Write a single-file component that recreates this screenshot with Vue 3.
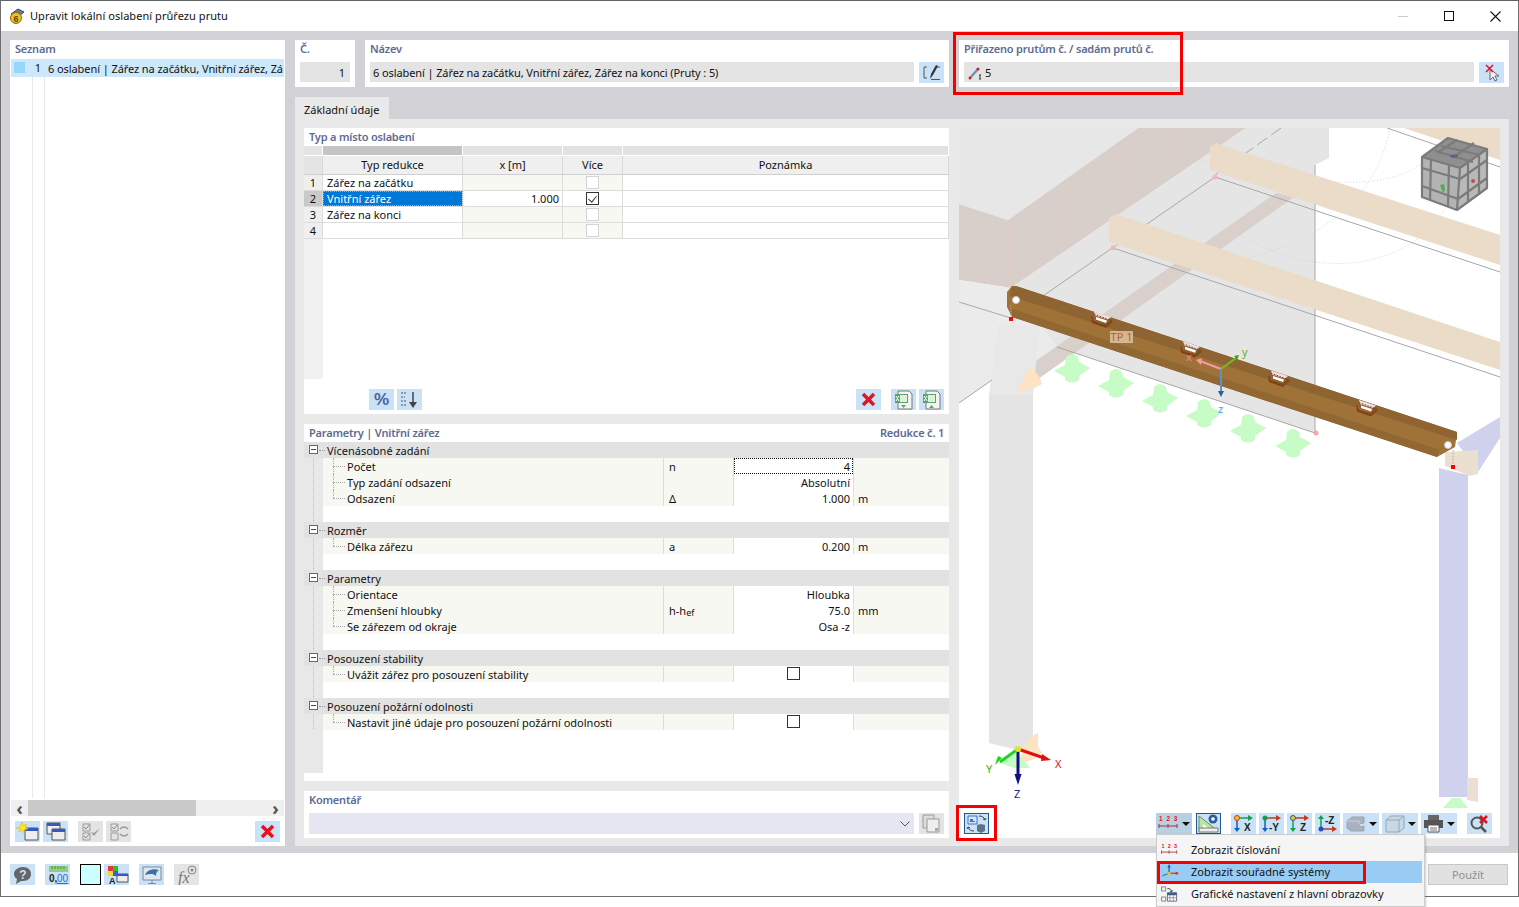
<script setup>
const icons = {
  pen: '<path d="M8 5H5v11h3" stroke="#555" fill="none"/><path d="M11 17l1-5 5-9 2 1-5 9z" fill="#333"/><path d="M18 5h3M12 17.500h9" stroke="#555"/>',
  pick: '<path d="M11 7l0 11 3-3 2 4 2-1-2-4 4 0z" fill="#eee" stroke="#667"/><path d="M7 3l7 7M14 3l-7 7" stroke="#e8101c" stroke-width="1.5"/>',
  del: '<path d="M7 5l11 11M18 5L7 16" stroke="#e8101c" stroke-width="3.4"/>',
  sort: '<path d="M4 4h5M4 8h4M4 12h5M4 16h6" stroke="#555" stroke-dasharray="2 1"/><path d="M16 3v12" stroke="#444" stroke-width="1.5"/><path d="M12 13h8l-4 6z" fill="#444"/>',
  xlsDown: '<path d="M7 2h11l3 3v15H7z" fill="#f4f4f4" stroke="#777"/><path d="M4 5h13v9H4z" fill="#5aa46a"/><path d="M9 6h7v7H9z" fill="#dff0df"/><path d="M5 7l3 5M8 7l-3 5" stroke="#fff"/><path d="M10 16h5l-2.5 3z" fill="#5aa46a"/>',
  xlsUp: '<path d="M7 2h11l3 3v15H7z" fill="#f4f4f4" stroke="#777"/><path d="M4 5h13v9H4z" fill="#5aa46a"/><path d="M9 6h7v7H9z" fill="#dff0df"/><path d="M5 7l3 5M8 7l-3 5" stroke="#fff"/><path d="M10 19h5l-2.5-3z" fill="#5aa46a"/>',
  newWin: '<path d="M10 7h13v12H10z" fill="#eee" stroke="#555"/><path d="M10 7h13v3H10z" fill="#3557c8"/><path d="M7 1l1.5 3.5L12 3l-2 3 3 2-3.5.5L9 12 7 9l-3 2 1-3.5L1 7l4-1z" fill="#ffe326" stroke="#d8b800" stroke-width=".5"/>',
  copyWin: '<path d="M4 2h13v11H4z" fill="#eee" stroke="#555"/><path d="M4 2h13v3H4z" fill="#3557c8"/><path d="M9 8h13v11H9z" fill="#eee" stroke="#555"/><path d="M9 8h13v3H9z" fill="#3557c8"/>',
  checks: '<path d="M5 3h7v7H5zM5 12h7v7H5z" fill="none" stroke="#999"/><path d="M6 6l2 2 3-4M6 15l2 2 3-4" stroke="#888" fill="none"/><path d="M13 11l3 4 6-8-6 5z" fill="#999"/>',
  swap: '<path d="M5 3h7v7H5zM5 12h7v7H5z" fill="none" stroke="#999"/><path d="M6 6l2 2 3-4" stroke="#888" fill="none"/><path d="M14 8c3-3 6-2 8 0M14 13c3 3 6 2 8 0" stroke="#999" stroke-width="1.5" fill="none"/>',
  help: '<path d="M13 3c5 0 8 3 8 7s-3 7-8 7h-2l-5 3 1-5c-2-1-3-3-3-5 0-4 4-7 9-7z" fill="#666"/><text x="13" y="14.5" font-size="12" font-weight="700" text-anchor="middle" fill="#c9e2f7" font-family="Liberation Sans">?</text>',
  decimals: '<path d="M4 2h19v6H4z" fill="#8fce7e"/><path d="M7 2v3M10 2v3M13 2v3M16 2v3M19 2v3" stroke="#4a8f3c"/><text x="4" y="18" font-size="10" font-weight="700" fill="#222" font-family="Liberation Sans">0,</text><text x="12" y="18" font-size="10" fill="#2d6fd0" text-decoration="underline" font-family="Liberation Sans">00</text>',
  colors: '<path d="M4 2h5v5H4z" fill="#e33"/><path d="M9 2h5v5H9z" fill="#3b3"/><path d="M4 7h5v5H4z" fill="#ed2"/><path d="M9 7h5v5H9z" fill="#36d"/><text x="5" y="20" font-size="9" font-weight="700" fill="#222" font-family="Liberation Sans">A</text><path d="M13 10h11v8H13z" fill="#eee" stroke="#555"/><path d="M13 10h11v2H13z" fill="#3557c8"/>',
  monitor: '<path d="M4 3h18v13H4z" fill="#dfe8f1" stroke="#7c8a99"/><path d="M6 11c2-5 8-7 14-5-2 1-3 3-3 6-3-3-7-2-11-1z" fill="#3d6fa8"/><path d="M13 16v3M9 19.5h8" stroke="#7c8a99"/>',
  formula: '<text x="4" y="19" font-size="16" font-style="italic" fill="#777" font-family="Liberation Serif">fx</text><circle cx="18" cy="6" r="4" fill="none" stroke="#888"/><circle cx="18" cy="6" r="1.5" fill="#888"/>',
  sync: '<path d="M4 3h9v8H4z" fill="#dbe7f6" stroke="#3b72c4"/><path d="M6 9V6h3v2h2v1z" fill="#3b72c4"/><path d="M13 12l4-1 4 1v6l-4 2-4-2z" fill="#5f7386"/><path d="M15 3c3 0 5 1 6 4M21 7l-2-1M21 7l1-2M10 18c-3 0-5-1-6-4M4 14l2 1M4 14l-1 2" stroke="#444" fill="none"/>',
  numbers: '<text x="3" y="8" font-size="6.5" font-weight="700" fill="#e8101c" font-family="Liberation Sans" letter-spacing="1">1 2 3</text><path d="M3 13h18" stroke="#a33"/><path d="M3 11v4M12 11v4M21 11v4" stroke="#a33"/>',
  ruler: '<path d="M3 3v15h19z" fill="#bde3a8" stroke="#6a8f5a"/><path d="M7 11v4h5z" fill="#fff"/><path d="M3 15h19v4H3z" fill="#eee" stroke="#777"/><circle cx="17" cy="6" r="4.5" fill="#2c5f9c"/><circle cx="17" cy="6" r="1.8" fill="#fff"/>',
  axisX: '<path d="M6 5v12" stroke="#1560b8" stroke-width="1.5"/><path d="M3 15h6l-3 4z" fill="#1560b8"/><path d="M6 5h13" stroke="#10a050" stroke-width="1.5"/><path d="M17 2l5 3-5 3z" fill="#10a050"/><circle cx="6" cy="5" r="2.5" fill="#f5c518" stroke="#c33"/><text x="13" y="18" font-size="10" font-weight="700" fill="#222" font-family="Liberation Sans">X</text>',
  axisY: '<path d="M6 5v12" stroke="#1560b8" stroke-width="1.5"/><path d="M3 15h6l-3 4z" fill="#1560b8"/><path d="M6 5h13" stroke="#c8381a" stroke-width="1.5"/><path d="M17 2l5 3-5 3z" fill="#c8381a"/><circle cx="6" cy="5" r="2.5" fill="#10a050"/><text x="10" y="18" font-size="10" font-weight="700" fill="#222" font-family="Liberation Sans">-Y</text>',
  axisZ: '<path d="M6 5v12" stroke="#10a050" stroke-width="1.5"/><path d="M3 15h6l-3 4z" fill="#10a050"/><path d="M6 5h13" stroke="#c8381a" stroke-width="1.5"/><path d="M17 2l5 3-5 3z" fill="#c8381a"/><circle cx="6" cy="5" r="2.5" fill="#f5c518" stroke="#1560b8"/><text x="13" y="18" font-size="10" font-weight="700" fill="#222" font-family="Liberation Sans">Z</text>',
  axisMZ: '<path d="M6 16V5" stroke="#10a050" stroke-width="1.5"/><path d="M3 6h6l-3-4z" fill="#10a050"/><path d="M6 16h13" stroke="#c8381a" stroke-width="1.5"/><path d="M17 13l5 3-5 3z" fill="#c8381a"/><circle cx="6" cy="16" r="2.5" fill="#1f4fd0"/><text x="10" y="11" font-size="10" font-weight="700" fill="#222" font-family="Liberation Sans">-Z</text>',
  solid: '<path d="M4 8l5-4h12v6l-5 1v3l5-1v5H8l-4-3z" fill="#a9b3bf" stroke="#9aa5b1"/><path d="M4 8h12v3" fill="none" stroke="#c9d0d8"/>',
  wire: '<path d="M4 7l5-4h13v12l-5 4H4zM4 7h13v12M17 7l5-4" fill="#c5ced8" fill-opacity=".5" stroke="#9aa5b1"/>',
  printer: '<path d="M7 2h11v5H7z" fill="#666"/><path d="M3 7h19v8H3z" fill="#555"/><path d="M7 12h11v7H7z" fill="#fff" stroke="#555"/><path d="M9 15h7M9 17h7" stroke="#777"/>',
  reset: '<circle cx="10" cy="10" r="5.5" fill="none" stroke="#555" stroke-width="2"/><path d="M14 14l5 5" stroke="#555" stroke-width="2.5"/><path d="M13 3l7 7M20 3l-7 7" stroke="#e8101c" stroke-width="2.5"/>',
  axes: '<path d="M12 12V4" stroke="#1f4fd0" stroke-width="1.5"/><path d="M10 5h4l-2-4z" fill="#1f4fd0"/><path d="M12 12h9" stroke="#c8381a" stroke-width="1.5"/><path d="M20 10l4 2-4 2z" fill="#c8381a"/><path d="M12 12l-8 3" stroke="#10a050" stroke-width="1.5"/><circle cx="12" cy="12" r="1.8" fill="#f5c518"/>',
  fromMain: '<path d="M3 2h5v5H3zM3 14h5v5H3z" fill="#eee" stroke="#777"/><path d="M10 4c3 0 5 1 5 4M15 8l-2-1M15 8l1-2" stroke="#333" fill="none"/><path d="M10 9h11v10H10z" fill="#fff" stroke="#556"/><path d="M10 9h11v3H10z" fill="#3a5f94"/><path d="M13 12v7M17 12v7M10 15h11" stroke="#889"/>',
  copyDoc: '<path d="M4 2h11v13H4z" fill="#ddd" stroke="#999"/><path d="M8 6h12v13H8z" fill="#eee" stroke="#999"/><path d="M16 15h3v3h-3z" fill="#aaa"/>'
}

const listTools = [
  { icon: 'newWin' },
  { icon: 'copyWin' },
  { icon: 'checks', off: true, gap: true },
  { icon: 'swap', off: true }
]

const footerTools = [
  { icon: 'help' },
  { icon: 'decimals', gap: true },
  { swatch: true, gap: true },
  { icon: 'colors' },
  { icon: 'monitor', gap: true },
  { icon: 'formula', off: true, gap: true }
]

const reductions = [
  { no: 1, type: 'Zářez na začátku', x: '', checked: false },
  { no: 2, type: 'Vnitřní zářez', x: '1.000', checked: true, active: true },
  { no: 3, type: 'Zářez na konci', x: '', checked: false },
  { no: 4, type: '', x: '', checked: false }
]

const groups = [
  {
    title: 'Vícenásobné zadání',
    rows: [
      { label: 'Počet', sym: 'n', value: '4', focus: true },
      { label: 'Typ zadání odsazení', value: 'Absolutní' },
      { label: 'Odsazení', sym: 'Δ', value: '1.000', unit: 'm' }
    ]
  },
  { title: 'Rozměr', rows: [{ label: 'Délka zářezu', sym: 'a', value: '0.200', unit: 'm' }] },
  {
    title: 'Parametry',
    rows: [
      { label: 'Orientace', value: 'Hloubka' },
      { label: 'Zmenšení hloubky', sym: 'h-h', sub: 'ef', value: '75.0', unit: 'mm' },
      { label: 'Se zářezem od okraje', value: 'Osa -z' }
    ]
  },
  { title: 'Posouzení stability', rows: [{ label: 'Uvážit zářez pro posouzení stability', check: true }] },
  { title: 'Posouzení požární odolnosti', rows: [{ label: 'Nastavit jiné údaje pro posouzení požární odolnosti', check: true }] }
]

const viewTools = [
  { icon: 'axisX' },
  { icon: 'axisY' },
  { icon: 'axisZ' },
  { icon: 'axisMZ' },
  { icon: 'solid', caret: true },
  { icon: 'wire', caret: true },
  { icon: 'printer', caret: true }
]

// zelene podpory pod prutem
const pads = [[1072, 368], [1116, 383], [1160, 398], [1204, 413], [1248, 428], [1293, 443]]
const notches = [0, 89, 177, 265]
</script>

<template>
  <div class="app">
    <div class="window">
      <header class="titlebar">
        <svg class="app-icon" viewBox="0 0 16 16" width="16" height="16">
          <path d="M2 6l7-5 6 3-6 5z" fill="#5f7f9f" stroke="#445"/>
          <circle cx="7" cy="10" r="5.5" fill="#f0c020" stroke="#8a6d10"/>
          <text x="7" y="13.5" font-size="9" font-weight="700" text-anchor="middle" fill="#5a4500" font-family="Liberation Sans">6</text>
        </svg>
        <span class="title-text">Upravit lokální oslabení průřezu prutu</span>
        <div class="win-controls">
          <span class="min"></span>
          <span class="max"></span>
          <svg viewBox="0 0 11 11" width="11" height="11"><path d="M.5.5l10 10M10.500.5l-10 10" stroke="#111" stroke-width="1.1"/></svg>
        </div>
      </header>

      <div class="body">
        <aside class="list-card">
          <h4 class="card-title">Seznam</h4>
          <div class="list-rows">
            <div class="list-row">
              <span class="list-swatch"></span>
              <span class="list-no">1</span>
              <span class="list-text">6 oslabení | Zářez na začátku, Vnitřní zářez, Zá</span>
            </div>
          </div>
          <div class="hscroll">
            <span class="arrow">‹</span>
            <span class="thumb"></span>
            <span class="arrow right">›</span>
          </div>
          <div class="list-tools">
            <button
              v-for="tool in listTools"
              :key="tool.icon"
              class="tool"
              :class="{ off: tool.off, gap: tool.gap }"
            >
              <svg viewBox="0 0 25 21" v-html="icons[tool.icon]"></svg>
            </button>
            <button class="tool push"><svg viewBox="0 0 25 21" v-html="icons.del"></svg></button>
          </div>
        </aside>

        <main class="main">
          <div class="head-row">
            <div class="head-card no-card">
              <h4 class="card-title">Č.</h4>
              <div class="input num">1</div>
            </div>
            <div class="head-card name-card">
              <h4 class="card-title">Název</h4>
              <div class="input-row">
                <div class="input">6 oslabení | Zářez na začátku, Vnitřní zářez, Zářez na konci (Pruty : 5)</div>
                <button class="tool"><svg viewBox="0 0 25 21" v-html="icons.pen"></svg></button>
              </div>
            </div>
            <div class="head-card assign-card">
              <h4 class="card-title">Přiřazeno prutům č. / sadám prutů č.</h4>
              <div class="input-row">
                <div class="input member">
                  <svg viewBox="0 0 16 14" width="16" height="14">
                    <path d="M3 12l8-9" stroke="#7b8db0" stroke-width="2.5"/>
                    <circle cx="3" cy="12" r="1.5" fill="#d02020"/>
                    <circle cx="11" cy="3" r="1.5" fill="#d02020"/>
                    <path d="M13 9v4M12 9h2M12 13h2" stroke="#333"/>
                  </svg>
                  <span>5</span>
                </div>
                <button class="tool"><svg viewBox="0 0 25 21" v-html="icons.pick"></svg></button>
              </div>
            </div>
          </div>

          <div class="tab">Základní údaje</div>

          <div class="tab-body">
            <div class="left-col">
              <section class="panel type-panel">
                <h4 class="card-title">Typ a místo oslabení</h4>
                <div class="grid band">
                  <span class="g-corner"></span>
                  <span class="band-dark"></span>
                  <span class="band-light"></span>
                  <span class="band-light"></span>
                  <span class="band-light"></span>
                </div>
                <div class="grid head">
                  <span class="g-corner"></span>
                  <span>Typ redukce</span>
                  <span>x [m]</span>
                  <span>Více</span>
                  <span>Poznámka</span>
                </div>
                <div v-for="row in reductions" :key="row.no" class="grid row" :class="{ active: row.active }">
                  <span class="g-no">{{ row.no }}</span>
                  <span class="c-type">{{ row.type }}</span>
                  <span class="c-x">{{ row.x }}</span>
                  <span class="c-more"><i class="check" :class="{ on: row.checked }"></i></span>
                  <span class="c-note"></span>
                </div>
                <div class="grid-rest"></div>
                <div class="panel-tools">
                  <button class="tool percent">%</button>
                  <button class="tool"><svg viewBox="0 0 25 21" v-html="icons.sort"></svg></button>
                  <button class="tool push"><svg viewBox="0 0 25 21" v-html="icons.del"></svg></button>
                  <button class="tool gap-l"><svg viewBox="0 0 25 21" v-html="icons.xlsDown"></svg></button>
                  <button class="tool"><svg viewBox="0 0 25 21" v-html="icons.xlsUp"></svg></button>
                </div>
              </section>

              <section class="panel param-panel">
                <div class="param-title">
                  <h4 class="card-title">Parametry | Vnitřní zářez</h4>
                  <h4 class="card-title">Redukce č. 1</h4>
                </div>
                <div class="tree">
                  <div v-for="(group, gi) in groups" :key="group.title" class="tree-group">
                    <div class="group-head">
                      <span class="expander"></span>
                      <span>{{ group.title }}</span>
                    </div>
                    <div
                      v-for="(row, ri) in group.rows"
                      :key="row.label"
                      class="p-row"
                      :class="{ 'end-row': ri === group.rows.length - 1 }"
                    >
                      <span class="p-gutter"></span>
                      <span class="p-label">{{ row.label }}</span>
                      <span class="p-sym">{{ row.sym }}<sub v-if="row.sub">{{ row.sub }}</sub></span>
                      <span class="p-value" :class="{ focus: row.focus }">
                        <i v-if="row.check" class="box"></i>
                        <template v-else>{{ row.value }}</template>
                      </span>
                      <span class="p-unit">{{ row.unit }}</span>
                    </div>
                    <div v-if="gi < groups.length - 1" class="p-blank"><span class="p-gutter"></span></div>
                  </div>
                  <div class="tree-rest"></div>
                </div>
              </section>

              <section class="panel comment-panel">
                <h4 class="card-title">Komentář</h4>
                <div class="input-row">
                  <div class="comment-input">
                    <svg viewBox="0 0 10 6" width="10" height="6"><path d="M.5.5L5 5 9.500.5" fill="none" stroke="#555"/></svg>
                  </div>
                  <button class="tool off"><svg viewBox="0 0 25 21" v-html="icons.copyDoc"></svg></button>
                </div>
              </section>
            </div>

            <div class="viewport">
              <svg class="scene" viewBox="959 128 541 710" width="541" height="710">
                <rect x="959" y="128" width="541" height="710" fill="#fff"/>
                <!-- blok vlevo nahore -->
                <polygon points="959,128 1138,128 1008,220 959,204" fill="#e7e7e7"/>
                <polygon points="959,204 1008,220 1138,128 1246,128 1011,288 959,280" fill="#d8cfca"/>
                <path d="M1008 220v68M1065 180v72M1123 140v72M1181 128v45" stroke="#e3c9bf"/>
                <polygon points="1246,128 1329,128 1329,158 1315,165 1315,433 1057,347 1011,288" fill="#e5e5e5"/>
                <polygon points="959,280 1011,288 1057,347 1030,380 992,380 959,403" fill="#ebebeb"/>
                <polygon points="1276,193 1294,197 1034,382 1020,372" fill="#d9d0cb"/>
                <!-- zelene podpory -->
                <path
                  v-for="pad in pads"
                  :key="pad[0]"
                  :transform="`translate(${pad[0]} ${pad[1]})`"
                  d="M-18 3L-7-3-6-11Q0-17 6-11L7-6 18 0 7 8 7 12Q0 17-7 12L-7 9Z"
                  fill="#c7fcc7"
                />
                <!-- sloupy -->
                <polygon points="989,395 998,325 1040,325 1033,395" fill="#e8e8e8"/>
                <polygon points="989,395 1033,395 1033,755 1017,750 989,743" fill="#e4e4e4"/>
                <polygon points="1439,468 1468,475 1468,797 1439,797" fill="#d0d1ec"/>
                <polygon points="1457,443 1500,417 1500,438 1478,472" fill="#d0d1ec"/>
                <polygon points="1445,452 1478,450 1478,474 1470,476 1445,466" fill="#ebdfd2"/>
                <polygon points="1467,778 1478,778 1478,802 1467,800" fill="#ebdfd2"/>
                <polygon points="1443,808 1452,798 1460,798 1468,808" fill="#c7fcc7"/>
                <path d="M1017 390l8-14 5-9 3 3 6 6 3 8-8 4-6-1-4 6z" fill="#fde2c4"/>
                <path d="M1020 760l4-14 8-10 6-3v14l4 6-8 6-8 3z" fill="#fde2c4"/>
                <polygon points="1000,763 1015,750 1030,768 1014,768" fill="#c7fcc7"/>
                <!-- tecovane kruznice -->
                <g fill="none" stroke="#d4d4d4" stroke-dasharray="1 2">
                  <path d="M1390 128Q1370 230 1240 260"/>
                  <path d="M1240 235Q1300 270 1360 262 1430 250 1455 190"/>
                  <path d="M1335 182Q1400 185 1425 160"/>
                  <path d="M1165 128Q1210 170 1240 180"/>
                </g>
                <!-- linie -->
                <g fill="none" stroke="#a8a8a8">
                  <path d="M1215 177L1500 272M1113 248L1500 377M1387 128L1500 167"/>
                  <path d="M1215 177L1011 318M959 302L1011 318M1057 347L1315 433M1315 165V433"/>
                  <path d="M959 403L992 380"/>
                  <path d="M1281 128L1215 175" stroke-dasharray="12 5"/>
                </g>
                <!-- svetle pruty -->
                <polygon points="1210,147 1216,143 1500,235 1500,265 1210,170" fill="#ebdcca"/>
                <polygon points="1109,218 1116,214 1500,342 1500,370 1109,242" fill="#ebdcca"/>
                <polygon points="1404,128 1500,128 1500,160" fill="#ebdcca"/>
                <circle cx="1215" cy="177" r="2.5" fill="#eeb9b9"/>
                <circle cx="1113" cy="248" r="2.5" fill="#eeb9b9"/>
                <circle cx="1316" cy="433" r="2.5" fill="#f5a5a5"/>
                <!-- prut -->
                <polygon points="1007,292 1012,286 1016,286 1457,432 1455,447 1437,457 1012,317 1007,307" fill="#9f7238"/>
                <polygon points="1012,286 1016,286 1457,432 1457,440 1010,296" fill="#8e6432"/>
                <polygon points="1012,309 1440,450 1437,457 1012,317" fill="#916733"/>
                <g v-for="dx in notches" :key="dx" :transform="`translate(${dx} ${dx * 0.334})`">
                  <polygon points="1094,311.500 1111,317 1108,319.500 1095,315.500" fill="#e5e5e5"/>
                  <polygon points="1096,317 1107,320.500 1106,323 1096,319.500" fill="#fff"/>
                  <polygon points="1092,316 1094,321 1106,324.500 1111,319 1113,322 1106,328 1092,323" fill="#7f4d1c"/>
                  <path d="M1094 314l16 6M1092 317v5l14 5" fill="none" stroke="#b01010" stroke-width=".9" stroke-dasharray="1.5 1.5"/>
                </g>
                <circle cx="1016" cy="300" r="3.5" fill="#fff" stroke="#c9c9c9"/>
                <circle cx="1448" cy="445" r="3.5" fill="#fff" stroke="#c9c9c9"/>
                <path d="M1011 305v12M1453 450v15" stroke="#b0a0a0" stroke-dasharray="1.5 1.5"/>
                <rect x="1009" y="317" width="4" height="4" fill="#ff0000"/>
                <rect x="1451" y="465" width="4" height="4" fill="#ff0000"/>
                <rect x="1110" y="331" width="23" height="12" fill="#e5cfae" fill-opacity=".75"/>
                <text x="1121.5" y="341" class="scene-label" text-anchor="middle" fill="#b5651d">TP 1</text>
                <!-- lokalni osy -->
                <path d="M1221 369L1200 361" stroke="#f59aa5" stroke-width="2"/>
                <path d="M1202 358l-6 2 5 5z" fill="#f59aa5"/>
                <path d="M1221 369l15-11" stroke="#6fc01a" stroke-width="2"/>
                <path d="M1234 356l5-1-2 5z" fill="#4a9c10"/>
                <path d="M1221 369v24" stroke="#5b93c8" stroke-width="2"/>
                <path d="M1218 391h6l-3 6z" fill="#2d5f90"/>
                <text x="1186" y="361" class="scene-label" fill="#f08a90">x</text>
                <text x="1242" y="356" class="scene-label" fill="#6fb020">y</text>
                <text x="1218" y="413" class="scene-label" fill="#4ea3f0">z</text>
                <!-- globalni osy -->
                <path d="M1018 749l26 9" stroke="#e01010" stroke-width="3"/>
                <path d="M1042 754l9 6-10 1z" fill="#e01010"/>
                <path d="M1018 749l-18 13" stroke="#18d818" stroke-width="3"/>
                <path d="M1002 758l-7 7 3-9z" fill="#18d818"/>
                <path d="M1018 749v28" stroke="#101080" stroke-width="3"/>
                <path d="M1014.5 774h7l-3.5 11z" fill="#101080"/>
                <circle cx="1018" cy="749" r="3" fill="#e8e020"/>
                <text x="1055" y="768" class="scene-label" fill="#e01010">X</text>
                <text x="986" y="773" class="scene-label" fill="#18c018">Y</text>
                <text x="1014" y="798" class="scene-label" fill="#202090">Z</text>
                <!-- kostka -->
                <g stroke-linejoin="round">
                  <polygon points="1448,138 1487,149 1460,168 1422,157" fill="#8f8f8f"/>
                  <polygon points="1422,157 1460,168 1457,210 1422,197" fill="#b3b3b3"/>
                  <polygon points="1460,168 1487,149 1487,188 1457,210" fill="#b9b9b9"/>
                  <g fill="none" stroke="#7b7b7b" stroke-width="2.2">
                    <polygon points="1448,138 1487,149 1487,188 1457,210 1422,197 1422,157"/>
                    <path d="M1422 157l38 11 27-19M1460 168l-3 42"/>
                    <path d="M1431 160l-1 40M1449 165l-1 41M1468 162v40M1479 155v40"/>
                    <path d="M1422 168l38 11 27-19M1422 186l36 13 29-21"/>
                    <path d="M1435 151l38 11M1441 146l39 9M1437 153l20-13M1452 158l22-15"/>
                  </g>
                  <path d="M1440 185l4-1 1 6-2 3z" fill="#4caf50"/>
                  <circle cx="1473" cy="181" r="2" fill="#b85450"/>
                  <ellipse cx="1454" cy="156" rx="4" ry="1.5" fill="#5a5f80"/>
                </g>
              </svg>

              <button class="tool sync outlined"><svg viewBox="0 0 25 21" v-html="icons.sync"></svg></button>
              <div class="view-tools">
                <button class="tool caret pressed">
                  <svg viewBox="0 0 25 21" v-html="icons.numbers"></svg><i></i>
                </button>
                <button class="tool outlined ruler-btn"><svg viewBox="0 0 25 21" v-html="icons.ruler"></svg></button>
                <button
                  v-for="tool in viewTools"
                  :key="tool.icon"
                  class="tool"
                  :class="{ caret: tool.caret }"
                >
                  <svg viewBox="0 0 25 21" v-html="icons[tool.icon]"></svg><i v-if="tool.caret"></i>
                </button>
                <button class="tool reset-btn"><svg viewBox="0 0 25 21" v-html="icons.reset"></svg></button>
              </div>
            </div>
          </div>
        </main>
      </div>

      <footer class="footer">
        <template v-for="(tool, i) in footerTools" :key="i">
          <span v-if="tool.swatch" class="swatch" :class="{ gap: tool.gap }"></span>
          <button v-else class="tool" :class="{ off: tool.off, gap: tool.gap }">
            <svg viewBox="0 0 25 21" v-html="icons[tool.icon]"></svg>
          </button>
        </template>
        <button class="apply">Použít</button>
      </footer>
    </div>

    <!-- rozbalene menu a cervene zvyrazneni lezi nad oknem -->
    <div class="menu">
      <div class="menu-item">
        <svg viewBox="0 0 25 21" v-html="icons.numbers"></svg><span>Zobrazit číslování</span>
      </div>
      <div class="menu-item hover">
        <svg viewBox="0 0 25 21" v-html="icons.axes"></svg><span>Zobrazit souřadné systémy</span>
      </div>
      <div class="menu-item">
        <svg viewBox="0 0 25 21" v-html="icons.fromMain"></svg><span>Grafické nastavení z hlavní obrazovky</span>
      </div>
    </div>
    <span class="mark mark-assign"></span>
    <span class="mark mark-sync"></span>
    <span class="mark mark-menu"></span>
  </div>
</template>

<style>
html,
body {
  margin: 0;
  background: #fff;
}
</style>

<style scoped>
* {
  box-sizing: border-box;
}

.app {
  position: relative;
  width: 1519px;
  height: 907px;
  overflow: hidden;
  background: #fff;
  color: #111;
  font-family: "Noto Sans", "Liberation Sans", sans-serif;
  font-size: 11px;
  line-height: 16px;
}

.window {
  height: 897px;
  display: flex;
  flex-direction: column;
  border: 1px solid #6e6e6e;
  border-top-color: #5d6468;
}

.titlebar {
  flex: 0 0 30px;
  display: flex;
  align-items: center;
  padding: 0 17px 0 8px;
  background: #fff;
}

.title-text {
  margin-left: 5px;
  font-size: 11px;
  letter-spacing: 0.05px;
}

.win-controls {
  margin-left: auto;
  display: flex;
  align-items: center;
  gap: 36px;
}

.min {
  width: 10px;
  height: 1px;
  background: #ccc;
}

.max {
  width: 10px;
  height: 10px;
  border: 1px solid #111;
}

.body {
  flex: 0 0 822px;
  display: flex;
  gap: 10px;
  padding: 9px 9px 7px 9px;
  background: #d2d2d6;
}

.card-title {
  margin: 0;
  color: #5d6b92;
  font-size: 11px;
  font-weight: 600;
  line-height: 18px;
  letter-spacing: -0.2px;
}

.tool {
  flex: none;
  width: 25px;
  height: 21px;
  padding: 0;
  border: 0;
  background: #c9e2f7;
  display: inline-flex;
  align-items: center;
  justify-content: center;
}

.tool svg {
  width: 25px;
  height: 21px;
  display: block;
  flex: none;
}

.tool.off {
  background: #e4e4e4;
}

.push {
  margin-left: auto;
}

/* seznam */
.list-card {
  flex: 0 0 275px;
  min-width: 0;
  display: flex;
  flex-direction: column;
  background: #fff;
}

.list-card > .card-title {
  padding: 0 5px;
  height: 19px;
}

.list-rows {
  flex: 1;
  margin: 0 1px;
  background:
    linear-gradient(#e8e8e8, #e8e8e8) 21px 0 / 1px 100% no-repeat,
    linear-gradient(#e8e8e8, #e8e8e8) 33px 0 / 1px 100% no-repeat;
}

.list-row {
  height: 18px;
  display: flex;
  align-items: center;
  background: #cde8fb;
  white-space: nowrap;
  overflow: hidden;
  letter-spacing: -0.08px;
}

.list-swatch {
  flex: none;
  width: 11px;
  height: 11px;
  margin: 0 0 1px 3px;
  background: #94d7f8;
}

.list-no {
  flex: none;
  width: 16px;
  text-align: right;
}

.list-text {
  margin-left: 7px;
  line-height: 19px;
}

.hscroll {
  height: 16px;
  margin: 2px 1px 0;
  display: flex;
  align-items: center;
  background: #efefef;
}

.arrow {
  width: 17px;
  text-align: center;
  font-size: 18px;
  font-weight: 700;
  color: #555;
  line-height: 14px;
}

.arrow.right {
  margin-left: auto;
  width: 17px;
}

.thumb {
  width: 168px;
  height: 16px;
  background: #c9c9c9;
}

.list-tools {
  display: flex;
  gap: 3px;
  padding: 5px 5px 4px;
}

.list-tools .gap {
  margin-left: 7px;
}

/* hlavni cast */
.main {
  flex: 1;
  min-width: 0;
  display: flex;
  flex-direction: column;
}

.head-row {
  flex: 0 0 47px;
  display: flex;
  gap: 10px;
}

.head-card {
  background: #fff;
  padding: 0 5px;
}

.head-card .card-title {
  height: 22px;
  line-height: 18px;
}

.no-card {
  flex: 0 0 60px;
}

.name-card {
  flex: 0 0 584px;
}

.assign-card {
  flex: 1;
  min-width: 0;
}

.input-row {
  display: flex;
  gap: 5px;
}

.input {
  flex: 1;
  height: 20px;
  padding: 2px 3px 0;
  background: #e4e4e4;
  display: flex;
  align-items: center;
  white-space: nowrap;
  overflow: hidden;
  letter-spacing: -0.1px;
}

.input.num {
  justify-content: flex-end;
  padding-right: 5px;
}

.member {
  gap: 2px;
}

.tab {
  margin-top: 10px;
  width: 94px;
  height: 22px;
  padding-left: 9px;
  line-height: 25px;
  background: #e9e9e9;
}

.tab-body {
  flex: 1;
  min-height: 0;
  display: flex;
  gap: 10px;
  padding: 9px 9px 8px;
  background: #e9e9e9;
}

.left-col {
  flex: 0 0 645px;
  display: flex;
  flex-direction: column;
  gap: 10px;
}

.panel {
  background: #fff;
}

.panel > .card-title,
.param-title {
  padding: 0 5px;
}

/* tabulka redukci */
.type-panel {
  flex: 0 0 286px;
  display: flex;
  flex-direction: column;
}

.grid {
  display: grid;
  grid-template-columns: 19px 140px 100px 60px 1fr;
}

.band {
  height: 10px;
  padding-bottom: 1px;
  column-gap: 0;
}

.band span {
  border-right: 1px solid #fff;
}

.g-corner {
  background: #e4e4e4;
}

.band-dark {
  background: #c4c4c4;
}

.band-light {
  background: #e2e2e2;
}

.head {
  height: 19px;
  border-bottom: 1px solid #d0d0d0;
}

.head span {
  background: #efefef;
  border-right: 1px solid #d8d8d8;
  text-align: center;
  line-height: 18px;
}

.head .g-corner {
  background: #e4e4e4;
}

.row {
  height: 16px;
  border-bottom: 1px solid #dcdcdc;
}

.row span {
  border-right: 1px solid #dcdcdc;
  line-height: 15px;
}

.g-no {
  background: #efefef;
  text-align: center;
  font-size: 11px;
}

.c-type {
  padding-left: 4px;
}

.c-x,
.c-more {
  background: #f7f8f2;
}

.c-x {
  text-align: right;
  padding-right: 3px;
}

.c-more {
  display: flex;
  align-items: center;
  justify-content: center;
}

.row.active .g-no {
  background: #c9c9c9;
}

.row.active .c-type {
  background: #0078d7;
  color: #fff;
  outline: 1px dotted #f39a2b;
  outline-offset: -1px;
}

.row.active .c-x {
  background: #fff;
}

.row.active .c-more {
  background: #fff;
}

.check {
  width: 13px;
  height: 13px;
  border: 1px solid #d4d4d4;
  background: #fff;
  position: relative;
}

.check.on {
  border-color: #333;
}

.check.on::after {
  content: "";
  position: absolute;
  left: 3px;
  top: 1px;
  width: 4px;
  height: 7px;
  border: solid #333;
  border-width: 0 1px 1px 0;
  transform: rotate(40deg);
}

.grid-rest {
  width: 19px;
  height: 140px;
  background: #f1f1f1;
}

.panel-tools {
  display: flex;
  gap: 3px;
  padding: 10px 5px 0 65px;
}

.panel-tools .gap-l {
  margin-left: 7px;
}

.percent {
  color: #4f5f9a;
  font-size: 17px;
  font-weight: 700;
}

/* parametry */
.param-panel {
  flex: 0 0 357px;
}

.param-title {
  display: flex;
  justify-content: space-between;
}

.tree {
  position: relative;
}

.group-head {
  position: relative;
  height: 16px;
  padding-left: 23px;
  background: #e2e2e2;
  line-height: 18px;
}

.expander {
  position: absolute;
  left: 5px;
  top: 3px;
  width: 9px;
  height: 9px;
  border: 1px solid #666;
  background: #fff;
}

.expander::after {
  content: "";
  position: absolute;
  left: 1px;
  right: 1px;
  top: 3px;
  height: 1px;
  background: #444;
}

.group-head::after {
  content: "";
  position: absolute;
  left: 15px;
  top: 8px;
  width: 6px;
  border-top: 1px dotted #999;
}

.p-row {
  display: grid;
  grid-template-columns: 19px 341px 70px 119px 1fr;
  grid-template-rows: 16px;
  height: 16px;
}

.p-row > span {
  line-height: 18px;
}

.p-gutter {
  background: linear-gradient(#bbb 50%, transparent 50%) 9px 0 / 1px 2px repeat-y #e8e8e8;
}

.p-label {
  position: relative;
  padding-left: 24px;
  background: #f7f8f2;
  border-right: 1px solid #ddd;
}

.p-label::before {
  content: "";
  position: absolute;
  left: 10px;
  top: 0;
  width: 12px;
  height: 16px;
  border-left: 1px dotted #aaa;
}

.p-label::after {
  content: "";
  position: absolute;
  left: 10px;
  top: 8px;
  width: 12px;
  border-top: 1px dotted #aaa;
}

.p-row.end-row .p-label::before {
  height: 8px;
}

.p-sym {
  padding-left: 5px;
  background: #f7f8f2;
  border-right: 1px solid #ddd;
}

.p-sym sub {
  font-size: 9px;
  line-height: 0;
  vertical-align: -1px;
}

.p-value {
  padding-right: 3px;
  text-align: right;
  background: #fff;
}

.p-value.focus {
  outline: 1px dotted #111;
  outline-offset: -1px;
}

.p-value:has(.box) {
  display: flex;
  align-items: center;
  justify-content: center;
  padding: 0;
}

.box {
  width: 13px;
  height: 13px;
  margin-top: -2px;
  border: 1px solid #333;
  background: #fff;
}

.p-unit {
  padding-left: 4px;
  background: #f7f8f2;
  border-left: 1px solid #ddd;
}

.p-blank {
  height: 16px;
}

.p-blank .p-gutter {
  display: block;
  width: 19px;
  height: 16px;
}

.tree-rest {
  width: 19px;
  height: 43px;
  background: #e8e8e8;
}

/* komentar */
.comment-panel {
  flex: 0 0 47px;
  padding: 0 5px;
}

.comment-panel > .card-title {
  padding: 0;
  height: 22px;
}

.comment-input {
  flex: 1;
  height: 21px;
  padding-right: 4px;
  background: #e6e6f2;
  display: flex;
  align-items: center;
  justify-content: flex-end;
}

/* 3D pohled */
.viewport {
  position: relative;
  flex: 1;
  min-width: 0;
  overflow: hidden;
  background: #fff;
}

.scene {
  display: block;
}

.scene-label {
  font-size: 11px;
}

.outlined {
  outline: 1px solid #1f5a96;
  outline-offset: -1px;
}

.sync {
  position: absolute;
  left: 5px;
  bottom: 4px;
}

.view-tools {
  position: absolute;
  left: 197px;
  bottom: 4px;
  display: flex;
  gap: 3px;
}

.caret {
  width: 36px;
  justify-content: flex-start;
}

.caret i {
  flex: none;
  width: 0;
  height: 0;
  margin-left: 1px;
  border: solid transparent;
  border-width: 4px 4px 0;
  border-top-color: #111;
}

.pressed {
  background: #b8d0e4;
}

.ruler-btn {
  margin-left: 1px;
  margin-right: 7px;
}

.reset-btn {
  margin-left: 7px;
}

/* spodni lista */
.footer {
  flex: 1;
  position: relative;
  display: flex;
  align-items: center;
  padding: 0 0 1px 9px;
  background: #fff;
}

.footer .gap {
  margin-left: 10px;
}

.swatch {
  width: 21px;
  height: 21px;
  border: 1px solid #000;
  background: #ccffff;
  margin-right: 3px;
}

.apply {
  position: absolute;
  right: 10px;
  top: 11px;
  width: 80px;
  height: 21px;
  padding: 0;
  border: 1px solid #c8c8c8;
  background: #e1e1e1;
  color: #8f8f8f;
  font: 11px "Noto Sans", "Liberation Sans", sans-serif;
}

.menu {
  position: absolute;
  left: 1156px;
  top: 834px;
  width: 269px;
  height: 73px;
  padding: 4px 2px 2px 1px;
  background: #f5f5f5;
  border: 1px solid #ccc;
  box-shadow: 1px 1px 2px rgba(0, 0, 0, 0.2);
}

.menu-item {
  height: 22px;
  display: flex;
  align-items: center;
  white-space: nowrap;
}

.menu-item svg {
  width: 21px;
  height: 18px;
  margin: 0 11px 0 1px;
  flex: none;
}

.menu-item.hover {
  background: #99ccf5;
}

.mark {
  position: absolute;
  border: 3px solid #f50000;
  pointer-events: none;
}

.mark-assign {
  left: 953px;
  top: 32px;
  width: 230px;
  height: 63px;
}

.mark-sync {
  left: 956px;
  top: 805px;
  width: 41px;
  height: 36px;
}

.mark-menu {
  left: 1157px;
  top: 861px;
  width: 209px;
  height: 23px;
}
</style>
